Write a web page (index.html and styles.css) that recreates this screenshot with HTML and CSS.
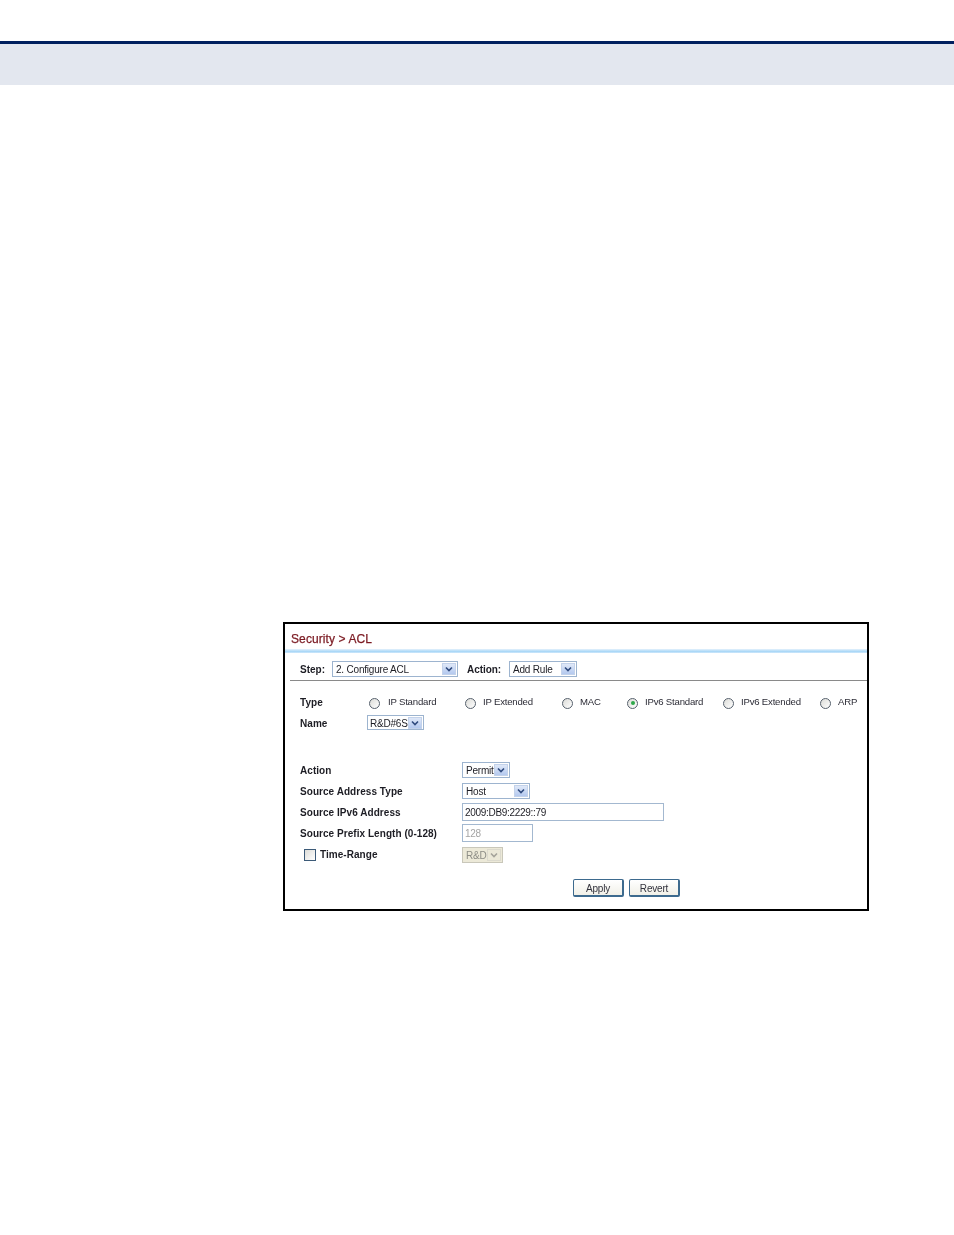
FILE: index.html
```html
<!DOCTYPE html>
<html lang="en">
<head>
<meta charset="utf-8">
<title>Security &gt; ACL</title>
<link rel="stylesheet" href="styles.css">
</head>
<body>
<header class="band"></header>
<main class="panel">
  <h1 class="title">Security &gt; ACL</h1>
  <div class="glow"></div>
  <div class="stepbar">
    <span class="lbl step-lbl">Step:</span>
    <span class="sel w-step"><span class="val">2. Configure ACL</span><span class="arrow"><svg viewBox="0 0 8 6"><path d="M1 1.5 4 4.5 7 1.5"/></svg></span></span>
    <span class="lbl act-lbl">Action:</span>
    <span class="sel w-act"><span class="val">Add Rule</span><span class="arrow"><svg viewBox="0 0 8 6"><path d="M1 1.5 4 4.5 7 1.5"/></svg></span></span>
  </div>
  <div class="body">
    <div class="typerow">
      <span class="lbl type-lbl">Type</span>
      <span class="opt o1"><span class="radio"></span><span>IP Standard</span></span>
      <span class="opt o2"><span class="radio"></span><span>IP Extended</span></span>
      <span class="opt o3"><span class="radio"></span><span>MAC</span></span>
      <span class="opt o4"><span class="radio on"></span><span>IPv6 Standard</span></span>
      <span class="opt o5"><span class="radio"></span><span>IPv6 Extended</span></span>
      <span class="opt o6"><span class="radio"></span><span>ARP</span></span>
    </div>
    <div class="namerow">
      <span class="lbl name-lbl">Name</span>
      <span class="sel w-name"><span class="val">R&amp;D#6S</span><span class="arrow"><svg viewBox="0 0 8 6"><path d="M1 1.5 4 4.5 7 1.5"/></svg></span></span>
    </div>
    <div class="form">
      <span class="lbl">Action</span>
      <span class="sel w-permit"><span class="val">Permit</span><span class="arrow"><svg viewBox="0 0 8 6"><path d="M1 1.5 4 4.5 7 1.5"/></svg></span></span>
      <span class="lbl">Source Address Type</span>
      <span class="sel w-host"><span class="val">Host</span><span class="arrow"><svg viewBox="0 0 8 6"><path d="M1 1.5 4 4.5 7 1.5"/></svg></span></span>
      <span class="lbl">Source IPv6 Address</span>
      <span class="input w-addr">2009:DB9:2229::79</span>
      <span class="lbl">Source Prefix Length (0-128)</span>
      <span class="input w-len off">128</span>
      <span class="lbl check"><span class="box"></span>Time-Range</span>
      <span class="sel w-rd off"><span class="val">R&amp;D</span><span class="arrow"><svg viewBox="0 0 8 6"><path d="M1 1.5 4 4.5 7 1.5"/></svg></span></span>
    </div>
    <div class="actions">
      <span class="btn">Apply</span>
      <span class="btn">Revert</span>
    </div>
  </div>
</main>
</body>
</html>
```
FILE: styles.css
```css
* { box-sizing: border-box; }
html, body { margin: 0; padding: 0; background: #fff; }
body { width: 954px; height: 1235px; overflow: hidden; font-family: "Liberation Sans", Arial, sans-serif; }

.band { margin-top: 41px; height: 44px; background: #e3e7ef; border-top: 3px solid #00205f; }

.panel {
  margin: 537px 0 0 283px;
  width: 586px;
  height: 289px;
  border: 2px solid #000;
  background: #fff;
  color: #1d1d24;
  font-size: 10px;
  letter-spacing: -.2px;
}
.panel > *, .body > * { filter: blur(.25px); }

.title {
  margin: 0;
  height: 25px;
  padding: 8px 0 0 6px;
  font-size: 12px;
  line-height: 14px;
  font-weight: 400;
  letter-spacing: .1px;
  color: #7b1a22;
  -webkit-text-stroke: .25px #7b1a22;
}
.glow { height: 4px; background: linear-gradient(#e6f2fc, #a9d7f7 60%, #cfe8fb); }

.stepbar {
  display: flex;
  align-items: center;
  height: 28px;
  margin-left: 5px;
  padding: 5px 0 0 10px;
  border-bottom: 1px solid #8a8a8a;
}
.lbl { font-weight: 700; font-size: 10px; letter-spacing: .05px; white-space: nowrap; line-height: 12px; }
.step-lbl { width: 32px; padding-top: 2px; letter-spacing: 0; }
.act-lbl { margin-left: 9px; width: 42px; padding-top: 2px; letter-spacing: -.05px; }

.sel {
  display: inline-flex;
  align-items: center;
  justify-content: space-between;
  height: 16px;
  padding: 1px 1px 1px 3px;
  background: #fff;
  border: 1px solid #9db4cf;
  color: #1d1d24;
  line-height: 12px;
}
.val { padding-top: 1px; }
.form .val, .namerow .val { padding-top: 2px; }
.arrow {
  display: flex; align-items: center; justify-content: center;
  width: 14px; height: 12px;
  background: linear-gradient(#dfe8f8, #b4c9ef);
  border: 1px solid #c3d2ea;
}
.arrow svg { width: 8px; height: 6px; }
.arrow path { fill: none; stroke: #2f4a7e; stroke-width: 1.6; }
.w-step { width: 126px; }
.w-act { width: 68px; }
.w-name { width: 57px; height: 15px; padding-left: 2px; }
.w-permit { width: 48px; }
.w-host { width: 68px; }
.w-rd { width: 41px; margin-top: 2px; background: #ece9d8; border-color: #c9c7ba; color: #8d8d86; }
.w-rd .arrow { background: #ece9d8; border-color: #dcdace; }
.w-rd .arrow path { stroke: #a5a49a; }

.body { padding: 0 0 0 15px; }

.typerow { display: flex; align-items: center; height: 21px; margin-top: 10px; }
.type-lbl { width: 69px; padding-top: 2px; }
.name-lbl { width: 67px; padding-top: 2px; }
.opt { display: flex; align-items: center; gap: 7px; white-space: nowrap; color: #2c2c36; font-size: 9.6px; letter-spacing: -.2px; }
.o1 { width: 96px; }
.o2 { width: 97px; }
.o3 { width: 65px; }
.o4 { width: 96px; }
.o5 { width: 97px; }
.o1 .radio + span { padding-left: 1px; }
.radio {
  flex: none;
  width: 11px; height: 11px; margin-top: 3px;
  border-radius: 50%;
  border: 1px solid #56606c;
  background: linear-gradient(135deg, #dcdcd8, #fff);
  display: flex; align-items: center; justify-content: center;
}
.radio.on::after { content: ""; width: 4px; height: 4px; border-radius: 50%; background: #2fa84a; }

.namerow { display: flex; align-items: center; height: 21px; }

.form {
  display: grid;
  grid-template-columns: 162px 1fr;
  grid-auto-rows: 21px;
  align-items: center;
  justify-items: start;
  margin-top: 26px;
}
.form > * { align-self: center; }
.form > .lbl { padding-top: 2px; }
.input {
  display: flex; align-items: center;
  height: 18px;
  padding: 2px 2px 0;
  border: 1px solid #a3b8d0;
  background: #fff;
  line-height: 12px;
  letter-spacing: -.3px;
}
.w-addr { width: 202px; }
.w-len { width: 71px; }
.input.off { color: #a5a5a5; }
.check { display: flex; align-items: center; gap: 4px; padding-left: 4px; }
.box {
  width: 12px; height: 12px; margin-top: 1px;
  border: 1px solid #3c5a78;
  background: linear-gradient(135deg, #dcdcd8, #fff);
}

.actions { display: flex; gap: 5px; margin: 15px 0 0 273px; }
.btn {
  display: flex; align-items: center; justify-content: center;
  width: 51px; height: 18px;
  padding-top: 2px;
  border: 1px solid #3d6a8e;
  border-right-width: 2px; border-bottom-width: 2px;
  border-radius: 2px;
  background: linear-gradient(#fff, #f1f0e8);
  color: #33333d;
  line-height: 12px;
}
```
